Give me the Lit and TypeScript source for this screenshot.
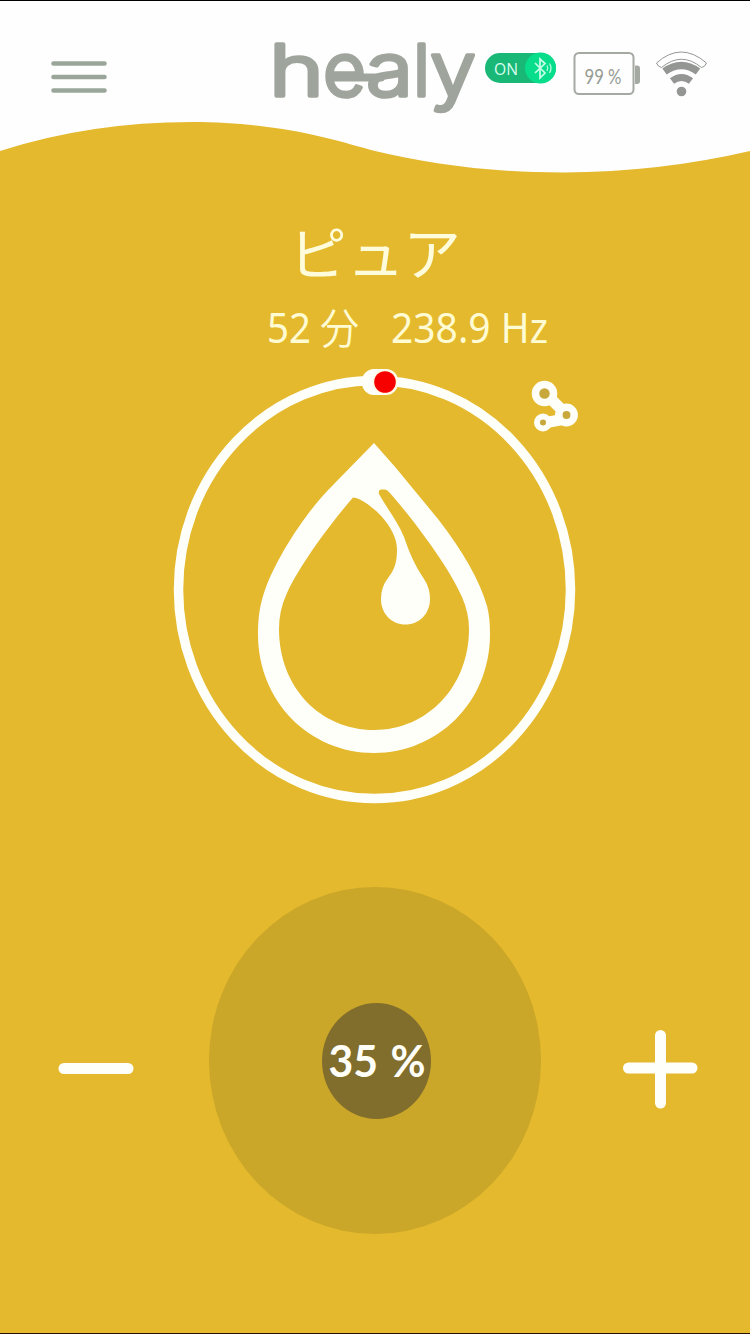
import { LitElement, html, css } from "lit";
import { customElement, property, state } from "lit/decorators.js";

@customElement("healy-header")
class HealyHeader extends LitElement {
  @property({ type: Number }) battery = 99;

  static styles = css`
    :host { display: block; background: #fefefe; border-top: 1px solid #000; height: 119px; }
    .bar { display: flex; align-items: flex-start; padding-left: 51px; }
    svg { display: block; flex: none; overflow: visible; }
    .menu { margin-top: 59px; }
    .logo { margin: 35px 0 0 167px; }
    .toggle { margin: 50px 0 0 6px; }
    .battery { margin: 50px 0 0 16px; }
    .wifi { margin: 49px 0 0 14px; }
    .word { font: 300 71px Inter, sans-serif; fill: #9fa59c; stroke: #9fa59c; stroke-width: 3.6; stroke-linejoin: round; stroke-linecap: round; }
    .big { font-size: 75px; }
    .on { font: 400 16px "Open Sans", sans-serif; fill: #d8fff0; }
    .pct { font: 400 22px Lato, sans-serif; fill: #979c95; }
  `;

  render() {
    return html`<div class="bar">
      <svg class="menu" width="57" height="36" viewBox="0 0 57 36">
        <path d="M2.5 3.5H53.5M2.5 17H53.5M2.5 30.5H53.5" stroke="#9ba69b" stroke-width="4.6" stroke-linecap="round" />
      </svg>
      <svg class="logo" width="204" height="80" viewBox="0 0 204 80">
        <text class="word" y="60"><tspan x="-6" textLength="55" lengthAdjust="spacingAndGlyphs">h</tspan><tspan class="big" x="48" textLength="43" lengthAdjust="spacingAndGlyphs">e</tspan><tspan class="big" x="91" textLength="47" lengthAdjust="spacingAndGlyphs">a</tspan><tspan x="138" textLength="17" lengthAdjust="spacingAndGlyphs">l</tspan><tspan class="big" x="155" textLength="46" lengthAdjust="spacingAndGlyphs">y</tspan></text>
        <path d="M56 41.500H106" stroke="#9fa59c" stroke-width="8" stroke-linecap="round" />
      </svg>
      <svg class="toggle" width="72" height="36" viewBox="0 0 72 36">
        <rect x="0" y="2" width="71" height="30" rx="15" fill="#19b877" />
        <circle cx="55.5" cy="17" r="15.5" fill="#08dd8c" />
        <text class="on" x="9" y="23.500" textLength="24" lengthAdjust="spacingAndGlyphs">ON</text>
        <path d="M50 12L60 22L55 27V8L60 12.5L50 22" fill="none" stroke="#c9ffe9" stroke-width="1.7" />
        <path d="M62 14.5Q63.5 17 62 20M64.5 12.5Q67.5 17 64.5 22" fill="none" stroke="#b5ffdf" stroke-width="1.3" />
      </svg>
      <svg class="battery" width="68" height="46" viewBox="0 0 68 46">
        <rect x="1.5" y="2" width="59" height="41" rx="4.5" fill="none" stroke="#a4aaa1" stroke-width="2" />
        <path d="M62 14.5H64Q67 14.5 67 17.5V30Q67 33 64 33H62Z" fill="#a4aaa1" />
        <text class="pct" x="11.500" y="32.500" textLength="37" lengthAdjust="spacingAndGlyphs">${`${this.battery} %`}</text>
      </svg>
      <svg class="wifi" width="54" height="48" viewBox="0 0 54 48">
        <g fill="none" stroke="#949694">
          <path d="M1.5 13Q26 -9 51.500 13Q50 17 46.500 17.500Q26.500 1 6.500 17.500Q3 17 1.500 13Z" stroke-width="1" />
          <path d="M9.500 21.500Q26.500 9.500 43 21.500" stroke-width="7.500" />
          <path d="M17 31Q26.500 24 36 31" stroke-width="7" />
        </g>
        <circle cx="26.500" cy="41.500" r="4.800" fill="#949694" />
      </svg>
    </div>`;
  }
}

@customElement("session-dial")
class SessionDial extends LitElement {
  static styles = css`
    :host { display: block; }
    svg { display: block; }
  `;

  render() {
    return html`<svg width="750" height="450" viewBox="0 360 750 450">
      <ellipse cx="374.500" cy="589.500" rx="196" ry="209" fill="none" stroke="#fffffa" stroke-width="9.500" />
      <rect x="362" y="369" width="36" height="26" rx="12" fill="#fffffa" />
      <circle cx="385" cy="382" r="12.500" fill="#fffbe0" />
      <circle cx="385" cy="382" r="10.800" fill="#f60000" />
      <g fill="none" stroke="#fffffa">
        <path d="M550 398L563 411M544 423L565 419" stroke-width="11" />
        <path d="M559 409V418" stroke-width="5" />
        <circle cx="544.500" cy="393.500" r="9" stroke-width="7.500" fill="#c8a83c" />
        <circle cx="566.500" cy="415" r="7.700" stroke-width="7.500" fill="#c8a83c" />
        <circle cx="543" cy="422.500" r="6" stroke-width="6" fill="#c8a83c" />
      </g>
      <path fill="#fffffa" fill-rule="evenodd" d="M374 443L396 468L438 519Q476 568 487 606Q490 617 490 634C490 703 437 753 374 753C310 753 258 702 258 634C258 617 260 604 265 590C277 556 308 509 334 484Z
        M353 497.500C331 523 301 563 287 593Q279 610 279 629C279 688 321 730 374 730C427 730 469 687 469 629Q469 613 462 597C448 565 412 518 389 492Q387 489.500 385 489.500H381Q378 490 379 494C386 507 398 522 404 537C410 554 414 564 424 579Q430 588 430 599C430 614 419 624.500 405.500 624.500C392 624.500 381 614 381 599Q381 587 388 578C395 569 397 562 397 549C397 527 371 503 356 498Z" />
    </svg>`;
  }
}

@customElement("app-root")
class AppRoot extends LitElement {
  @state() private level = 35;
  @state() private minutes = 52;
  @state() private frequency = 238.9;

  static styles = css`
    :host { display: block; width: 750px; height: 1334px; background: #e4b92d; overflow: hidden; box-sizing: border-box; border-bottom: 1px solid #2a1005; }
    svg { display: block; }
    .title { font: 400 57px "Noto Sans CJK JP", sans-serif; fill: #fffcdc; }
    .info { font: 400 42px "Noto Sans", "Noto Sans CJK JP", sans-serif; fill: #fffbd2; }
    .light { font: 350 42px "Noto Sans CJK JP", sans-serif; }
    .controls { display: flex; align-items: flex-start; margin-top: 77px; padding-left: 58px; }
    .minus { margin-top: 142px; }
    .knob { margin-left: 75px; }
    .plus { margin: 142px 0 0 81px; }
    button { display: block; border: 0; padding: 0; background: none; }
    .level { font: 700 44px Lato, sans-serif; fill: #fffff8; word-spacing: 2px; }
  `;

  private change(step: number) {
    this.level = Math.max(0, Math.min(100, this.level + step));
  }

  render() {
    return html`
      <healy-header></healy-header>
      <svg width="750" height="60" viewBox="0 120 750 60">
        <path fill="#fefefe" d="M0 119V151Q90 122 192 122C280 122 335 140 375 151C430 164 490 172.500 563 172.500Q660 172 750 151V119Z" />
      </svg>
      <svg width="750" height="180" viewBox="0 180 750 180">
        <text class="title" x="289" y="275" textLength="172" lengthAdjust="spacingAndGlyphs">ピュア</text>
        <text class="info" x="267" y="343" textLength="44" lengthAdjust="spacingAndGlyphs">${this.minutes}</text>
        <text class="info light" x="320" y="344" textLength="39" lengthAdjust="spacingAndGlyphs">分</text>
        <text class="info" x="391" y="343" textLength="157" lengthAdjust="spacingAndGlyphs">${`${this.frequency} Hz`}</text>
      </svg>
      <session-dial></session-dial>
      <div class="controls">
        <button class="minus" aria-label="-" @click=${() => this.change(-1)}>
          <svg width="76" height="80"><path d="M6 39.500H70" stroke="#fffffa" stroke-width="11" stroke-linecap="round" /></svg>
        </button>
        <svg class="knob" width="332" height="348" viewBox="209 887 332 348">
          <ellipse cx="375" cy="1060.500" rx="166" ry="173.500" fill="#caa629" />
          <ellipse cx="376.500" cy="1061" rx="54.500" ry="58" fill="#816d2c" />
          <text class="level" x="328.500" y="1077" textLength="97" lengthAdjust="spacingAndGlyphs">${`${this.level} %`}</text>
        </svg>
        <button class="plus" aria-label="+" @click=${() => this.change(1)}>
          <svg width="76" height="80"><path d="M6.500 39H70M38.500 6.500V74" stroke="#fffffa" stroke-width="11" stroke-linecap="round" /></svg>
        </button>
      </div>
    `;
  }
}
